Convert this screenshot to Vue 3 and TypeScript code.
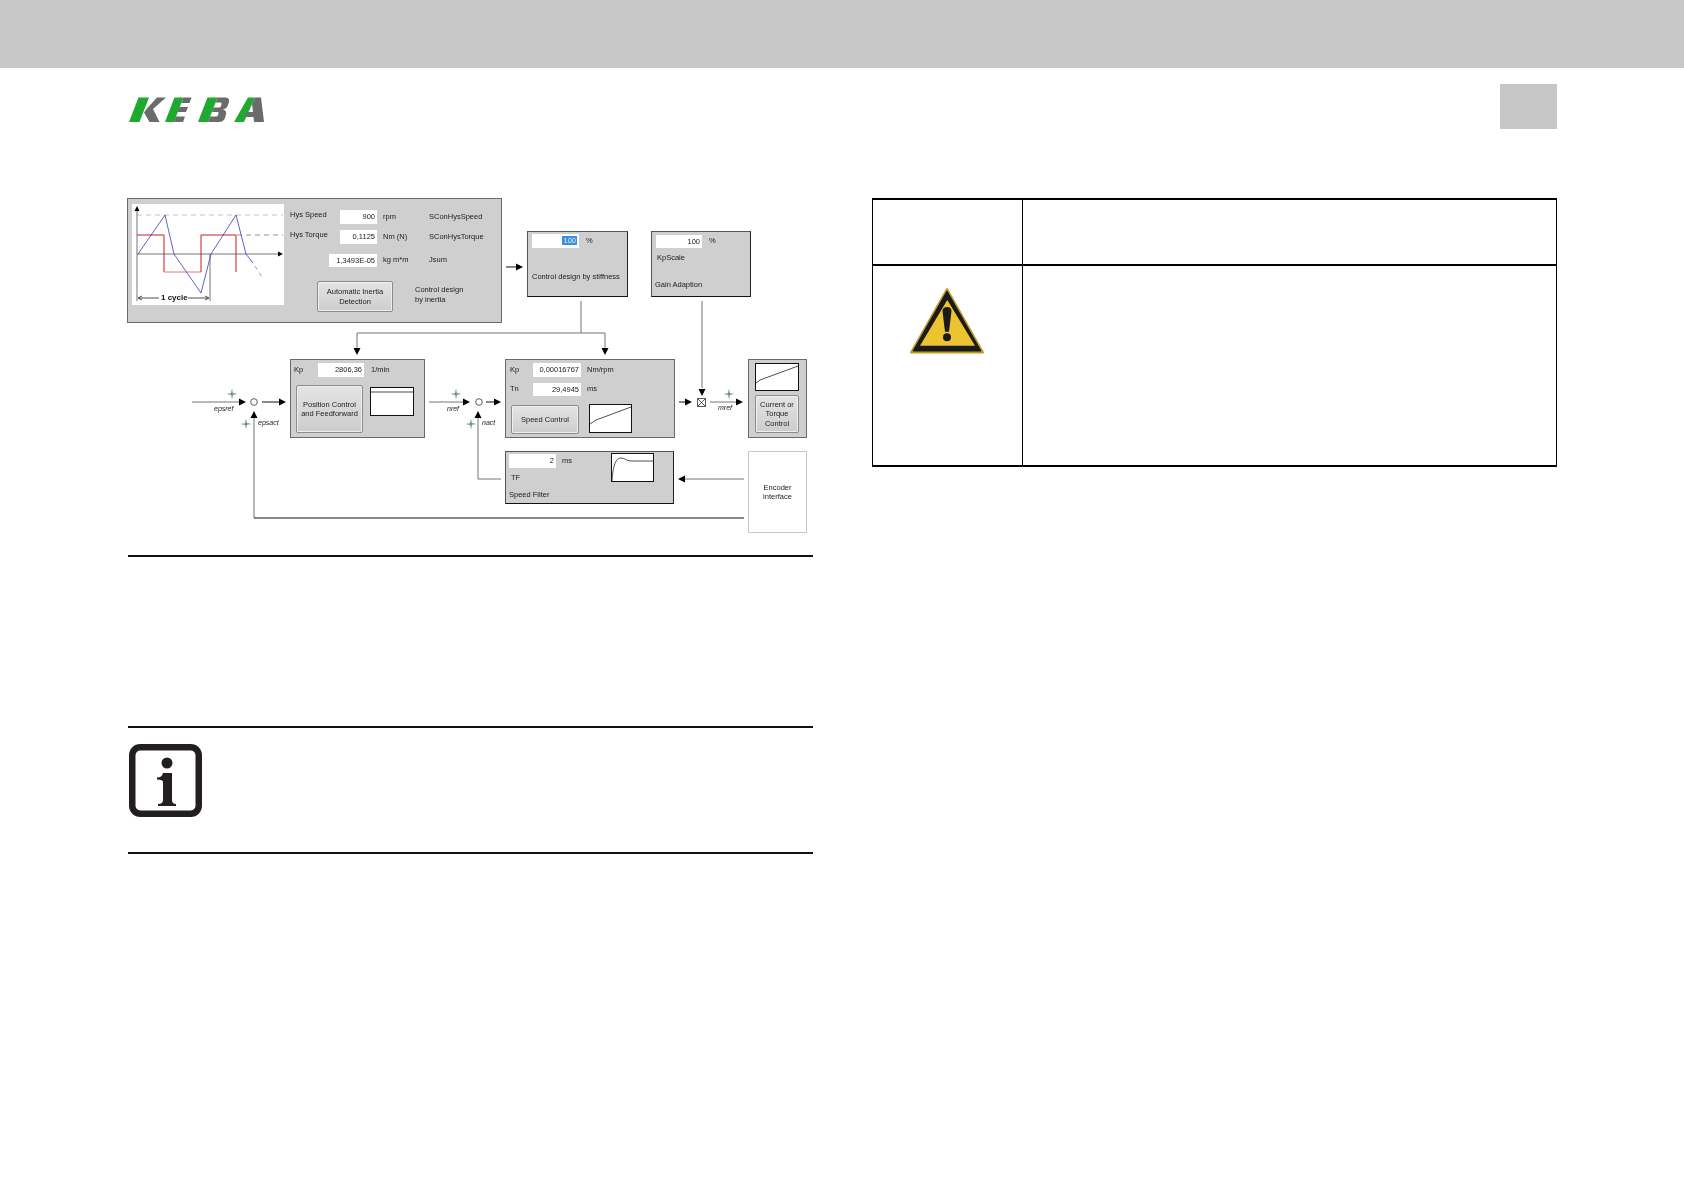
<script setup lang="ts">
const OX = 127
const OY = 198

interface Box { x: number; y: number; w: number; h: number; kind: string; text?: string; sel?: boolean }
interface Label { x: number; y: number; text: string; it?: boolean; b?: boolean }

function place(x: number, y: number, w?: number, h?: number) {
  const s: Record<string, string> = { left: `${x - OX}px`, top: `${y - OY}px` }
  if (w !== undefined) s.width = `${w}px`
  if (h !== undefined) s.height = `${h}px`
  return s
}

const boxes: Box[] = [
  { x: 127, y: 198, w: 375, h: 125, kind: 'panel' },
  { x: 132, y: 204, w: 152, h: 101, kind: 'white' },
  { x: 527, y: 231, w: 101, h: 66, kind: 'panel dark' },
  { x: 651, y: 231, w: 100, h: 66, kind: 'panel dark' },
  { x: 290, y: 359, w: 135, h: 79, kind: 'panel' },
  { x: 505, y: 359, w: 170, h: 79, kind: 'panel' },
  { x: 748, y: 359, w: 59, h: 79, kind: 'panel' },
  { x: 505, y: 451, w: 169, h: 53, kind: 'panel dark' },
  { x: 748, y: 451, w: 59, h: 82, kind: 'enc', text: 'Encoder\ninterface' },
  { x: 340, y: 210, w: 37, h: 14, kind: 'input', text: '900' },
  { x: 340, y: 230, w: 37, h: 14, kind: 'input', text: '0,1125' },
  { x: 329, y: 254, w: 48, h: 13, kind: 'input', text: '1,3493E-05' },
  { x: 317, y: 281, w: 76, h: 31, kind: 'btn', text: 'Automatic Inertia\nDetection' },
  { x: 532, y: 234, w: 47, h: 14, kind: 'input', text: '100', sel: true },
  { x: 656, y: 235, w: 46, h: 13, kind: 'input', text: '100' },
  { x: 318, y: 363, w: 46, h: 14, kind: 'input', text: '2806,36' },
  { x: 296, y: 385, w: 67, h: 48, kind: 'btn', text: 'Position Control\nand Feedforward' },
  { x: 370, y: 387, w: 44, h: 29, kind: 'chart' },
  { x: 533, y: 363, w: 48, h: 14, kind: 'input', text: '0,00016767' },
  { x: 533, y: 383, w: 48, h: 13, kind: 'input', text: '29,4945' },
  { x: 511, y: 405, w: 68, h: 29, kind: 'btn', text: 'Speed Control' },
  { x: 589, y: 404, w: 43, h: 29, kind: 'chart' },
  { x: 755, y: 363, w: 44, h: 28, kind: 'chart' },
  { x: 755, y: 395, w: 44, h: 38, kind: 'btn', text: 'Current or\nTorque\nControl' },
  { x: 509, y: 454, w: 47, h: 14, kind: 'input', text: '2' },
  { x: 611, y: 453, w: 43, h: 29, kind: 'chart' },
]

const labels: Label[] = [
  { x: 290, y: 215, text: 'Hys Speed' },
  { x: 290, y: 235, text: 'Hys Torque' },
  { x: 383, y: 217, text: 'rpm' },
  { x: 383, y: 237, text: 'Nm (N)' },
  { x: 383, y: 260, text: 'kg m*m' },
  { x: 429, y: 217, text: 'SConHysSpeed' },
  { x: 429, y: 237, text: 'SConHysTorque' },
  { x: 429, y: 260, text: 'Jsum' },
  { x: 415, y: 290, text: 'Control design' },
  { x: 415, y: 300, text: 'by inertia' },
  { x: 586, y: 241, text: '%' },
  { x: 532, y: 277, text: 'Control design by stiffness' },
  { x: 709, y: 241, text: '%' },
  { x: 657, y: 258, text: 'KpScale' },
  { x: 655, y: 285, text: 'Gain Adaption' },
  { x: 294, y: 370, text: 'Kp' },
  { x: 371, y: 370, text: '1/min' },
  { x: 510, y: 370, text: 'Kp' },
  { x: 587, y: 370, text: 'Nm/rpm' },
  { x: 510, y: 389, text: 'Tn' },
  { x: 587, y: 389, text: 'ms' },
  { x: 562, y: 461, text: 'ms' },
  { x: 511, y: 478, text: 'TF' },
  { x: 509, y: 495, text: 'Speed Filter' },
  { x: 214, y: 409, text: 'epsref', it: true },
  { x: 258, y: 423, text: 'epsact', it: true },
  { x: 447, y: 409, text: 'nref', it: true },
  { x: 482, y: 423, text: 'nact', it: true },
  { x: 718, y: 408, text: 'mref', it: true },
  { x: 161, y: 298, text: '1 cycle', b: true },
]

const lines: string[] = [
  'M192 402H240', 'M429 402H464', 'M710 402H737',
  'M254 417V518', 'M478 417V479H501', 'M744 479H685',
  'M581 301V333', 'M357 333H605', 'M357 333V348', 'M605 333V348', 'M702 301V388',
]
const shafts: string[] = ['M262 402H280', 'M486 402H494', 'M679 402H686', 'M506 267H516']

const arrows = [
  [246, 402, 'r'], [286, 402, 'r'], [470, 402, 'r'], [501, 402, 'r'], [692, 402, 'r'], [743, 402, 'r'], [523, 267, 'r'],
  [254, 411, 'u'], [478, 411, 'u'], [678, 479, 'l'],
  [357, 355, 'd'], [605, 355, 'd'], [702, 396, 'd'],
].map(([x, y, d]) => {
  const X = x as number, Y = y as number
  if (d === 'r') return `${X},${Y} ${X - 7},${Y - 3.5} ${X - 7},${Y + 3.5}`
  if (d === 'l') return `${X},${Y} ${X + 7},${Y - 3.5} ${X + 7},${Y + 3.5}`
  if (d === 'u') return `${X},${Y} ${X - 3.5},${Y + 7} ${X + 3.5},${Y + 7}`
  return `${X},${Y} ${X - 3.5},${Y - 7} ${X + 3.5},${Y - 7}`
})

const stars = [[232, 394], [246, 424], [456, 394], [471, 424], [729, 394]]
</script>

<template>
  <div class="page">
    <header class="band"></header>
    <div class="top">
      <svg class="logo" viewBox="0 0 146 36" width="146" height="36" role="img" aria-label="KEBA logo">
        <polygon class="g" points="5,30 15.500,30 25,5.500 14.500,5.500" />
        <polygon class="k" points="23,16.500 33,5.500 42,5.500 29,17 35.500,30 25.500,30 20,20.500" />
        <polygon class="g" points="41,30 50,30 59.500,5.500 50.500,5.500" />
        <polygon class="k" points="59.500,5.500 67.500,5.500 65.500,11 57.500,11" />
        <polygon class="k" points="55.500,15 64,15 62,20 53.500,20" />
        <polygon class="k" points="52,24.500 61,24.500 59,30 50,30" />
        <polygon class="g" points="74,30 84,30 93.500,5.500 83.500,5.500" />
        <path class="k" d="M93.500 5.500H101Q106 5.500 105 10L104 13Q103 16.500 99 17.500Q103 18.500 102 22.500L101 26Q99.500 30 95 30H84L86 24.500H92Q93.500 24.500 94 23L94.500 21.500Q95 20 93.500 20H88L89.500 15.500H95Q96.500 15.500 97 14L97.500 12Q98 10.500 96.500 10.500H91.500Z" />
        <polygon class="g" points="110,30 120,30 131,5.500 124,5.500" />
        <polygon class="k" points="131,5.500 137,5.500 140,30 130,30 129.500,25 121,25 123,20 129,20 128,12" />
      </svg>
      <div class="pageno"></div>
    </div>

    <main class="cols">
      <section class="left">
        <div class="canvas">
          <div v-for="(b, i) in boxes" :key="i" class="node" :class="b.kind" :style="place(b.x, b.y, b.w, b.h)">
            <span v-if="b.text" :class="{ sel: b.sel }">{{ b.text }}</span>
          </div>
          <span v-for="(l, i) in labels" :key="'l' + i" class="label" :class="{ it: l.it, b: l.b }" :style="place(l.x, l.y)">{{ l.text }}</span>

          <svg class="wires" viewBox="127 198 686 357" width="686" height="357">
            <path d="M137 215H283" class="dash" />
            <path d="M237 235H283" class="dash dk" />
            <path d="M137 210V301M137 254H279M210 254V301" class="axis" />
            <polygon points="137,206 134.500,211 139.500,211" class="ah" />
            <polygon points="283,254 278,251.500 278,256.500" class="ah" />
            <path d="M137 235H164V272" class="red" />
            <path d="M164 272H201" class="red lt" />
            <path d="M201 272V235H236V272" class="red" />
            <path d="M138 254L165 215L174 254L201 293L211 254L236 215L246 254L253 263" class="blue" />
            <path d="M255 266L263 279" class="blue dashb" />
            <path d="M139 298H159M188 298H208" class="thin" />
            <path d="M142 296L138 298L142 300M205 296L209 298L205 300" class="thin" />

            <path d="M371 392H413" class="ink" />
            <path d="M590 424L596 420L631 407" class="ink" />
            <path d="M756 383L760 380L798 366" class="ink" />
            <path d="M612 481C613 465 616 458 621 458C625 458 626 461 631 461H653" class="ink" />

            <path v-for="(d, i) in lines" :key="i" :d="d" class="wire" />
            <path v-for="(d, i) in shafts" :key="'sh' + i" :d="d" class="wire blk" />
            <path d="M254 518H744" class="wire blk" />
            <polygon v-for="(p, i) in arrows" :key="'a' + i" :points="p" class="ah" />
            <circle cx="254" cy="402" r="3.300" class="sum" />
            <circle cx="479" cy="402" r="3.300" class="sum" />
            <path d="M697.500 398.500H705.500V406.500H697.500ZM697.500 398.500L705.500 406.500M705.500 398.500L697.500 406.500" class="sum" />
            <polygon
              v-for="(s, i) in stars"
              :key="'s' + i"
              :transform="`translate(${s[0]} ${s[1]})`"
              points="-5.500,0 -1,-0.800 0,-5.500 0.800,-1 5.500,0 1,0.800 0,5.500 -0.800,1"
              class="star"
            />
          </svg>
        </div>

        <hr class="rule" />
        <div class="gap-a"></div>
        <hr class="rule" />
        <div class="note">
          <svg class="info" viewBox="0 0 75 75" width="75" height="75" aria-label="Information">
            <rect x="4.250" y="4.250" width="66.500" height="66.500" rx="8" class="ibox" />
            <circle cx="39" cy="20" r="5.500" class="ifill" />
            <path d="M29 34.500Q34 34.500 35 30H44V57Q44 61 48 61V63H30V61Q35 61 35 57V39Q35 36.500 29 36.500Z" class="ifill" />
          </svg>
        </div>
        <hr class="rule" />
      </section>

      <section class="right">
        <div class="tbl">
          <div class="cell c1 r1"></div>
          <div class="cell c2 r1"></div>
          <div class="cell c1 r2">
            <svg class="warn" viewBox="0 0 76 68" width="76" height="68" aria-label="Warning">
              <polygon points="38,2 2,65.500 74,65.500" class="w1" />
              <polygon points="38,4 4,64 72,64" class="w2" />
              <polygon points="38.300,13 11,58.700 66,58.700" class="w3" />
              <path d="M33.500 24Q33.700 20 38 20Q42.300 20 42.500 24L40 44.700H36Z" class="w4" />
              <circle cx="38" cy="50.300" r="4" class="w4" />
            </svg>
          </div>
          <div class="cell c2 r2"></div>
        </div>
      </section>
    </main>
  </div>
</template>

<style>
html, body { margin: 0; background: #fff; }
</style>

<style scoped>
.page {
  width: 1684px;
  height: 1191px;
  background: #fff;
  font-family: "Liberation Sans", Arial, sans-serif;
  overflow: hidden;
}
.band { height: 68px; background: #c8c8c8; }
.top {
  display: flex;
  justify-content: space-between;
  align-items: flex-start;
  height: 130px;
  padding: 16px 127px 0 124px;
  box-sizing: border-box;
}
.logo { margin-top: 8px; }
.g { fill: #1fa92e; }
.k { fill: #6b6b6b; }
.pageno { width: 57px; height: 45px; background: #c6c6c6; }

.cols { display: flex; padding-left: 127px; }
.left { width: 686px; }
.right { margin-left: 59px; width: 685px; }

.canvas { position: relative; width: 686px; height: 357px; filter: blur(0.3px); }
.node { position: absolute; box-sizing: border-box; font-size: 7.5px; line-height: 9.5px; color: #1c1c1c; }
.panel { background: #cfcfcf; border: 1px solid #6a6a6a; }
.panel.dark { border-color: #555; border-bottom-color: #111; border-right-color: #222; }
.white { background: #fff; }
.enc {
  background: #fff;
  border: 1px solid #c8c8c8;
  display: flex;
  align-items: center;
  justify-content: center;
  text-align: center;
  white-space: pre-line;
}
.input {
  background: #fff;
  text-align: right;
  padding-right: 2px;
  line-height: 14px;
  white-space: nowrap;
}
.sel { background: #3f8fe0; color: #dbe9f8; padding: 0 1px; }
.btn {
  display: flex;
  align-items: center;
  justify-content: center;
  text-align: center;
  white-space: pre-line;
  background: linear-gradient(#e4e4e4, #cdcdcd);
  border: 1px solid #8c8c8c;
  border-radius: 2px;
  box-shadow: inset 0 0 0 1px #efefef;
}
.chart { background: #fff; border: 1px solid #111; }
.label {
  position: absolute;
  font-size: 7.5px;
  line-height: 10px;
  margin-top: -5px;
  white-space: nowrap;
  color: #1c1c1c;
}
.label.it { font-style: italic; font-size: 7px; }
.label.b { font-size: 8px; font-weight: 700; color: #111; }
.wires { position: absolute; left: 0; top: 0; overflow: visible; pointer-events: none; }
.wires path, .wires circle { fill: none; }
.wire { stroke: #757575; stroke-width: 1; }
.blk { stroke: #111; }
.ah { fill: #000; }
.wires .sum { stroke: #333; stroke-width: 0.8; fill: #fff; }
.dash { stroke: #aaa; stroke-width: 0.7; stroke-dasharray: 5 4; }
.dk { stroke: #666; }
.axis { stroke: #666; stroke-width: 0.9; }
.red { stroke: #c0202a; stroke-width: 1; }
.lt { stroke: #e07a70; }
.blue { stroke: #3a3ab8; stroke-width: 0.8; }
.dashb { stroke-dasharray: 4 4; stroke: #7a7ac0; }
.thin { stroke: #222; stroke-width: 0.8; }
.ink { stroke: #222; stroke-width: 0.8; }
.star { fill: #6f9580; }

.rule { margin: 0 0 0 1px; height: 2px; border: 0; background: #111; width: 685px; }
.gap-a { height: 169px; }
.note { height: 124px; box-sizing: border-box; padding: 15px 0 0 1px; }
.info { display: block; }
.ibox { fill: #fff; stroke: #231f20; stroke-width: 6.500; }
.ifill { fill: #231f20; }

.tbl {
  display: grid;
  grid-template-columns: 150px 534px;
  grid-template-rows: 66px 199px;
  border-style: solid;
  border-color: #000;
  border-width: 2px 1px;
  box-sizing: border-box;
  width: 685px;
  height: 269px;
}
.cell { box-sizing: border-box; }
.c1 { border-right: 1px solid #000; }
.r1 { border-bottom: 2px solid #000; }
.r2 { padding: 21px 0 0 36px; }
.c2.r2 { padding: 0; }
.warn { display: block; }
.w1 { fill: #c09a24; stroke: #c09a24; stroke-width: 2; stroke-linejoin: round; }
.w2 { fill: #1a1a1a; stroke: #1a1a1a; stroke-width: 1; stroke-linejoin: round; }
.w3 { fill: #eec332; }
.warn .w4 { fill: #1a1a1a; }
</style>
